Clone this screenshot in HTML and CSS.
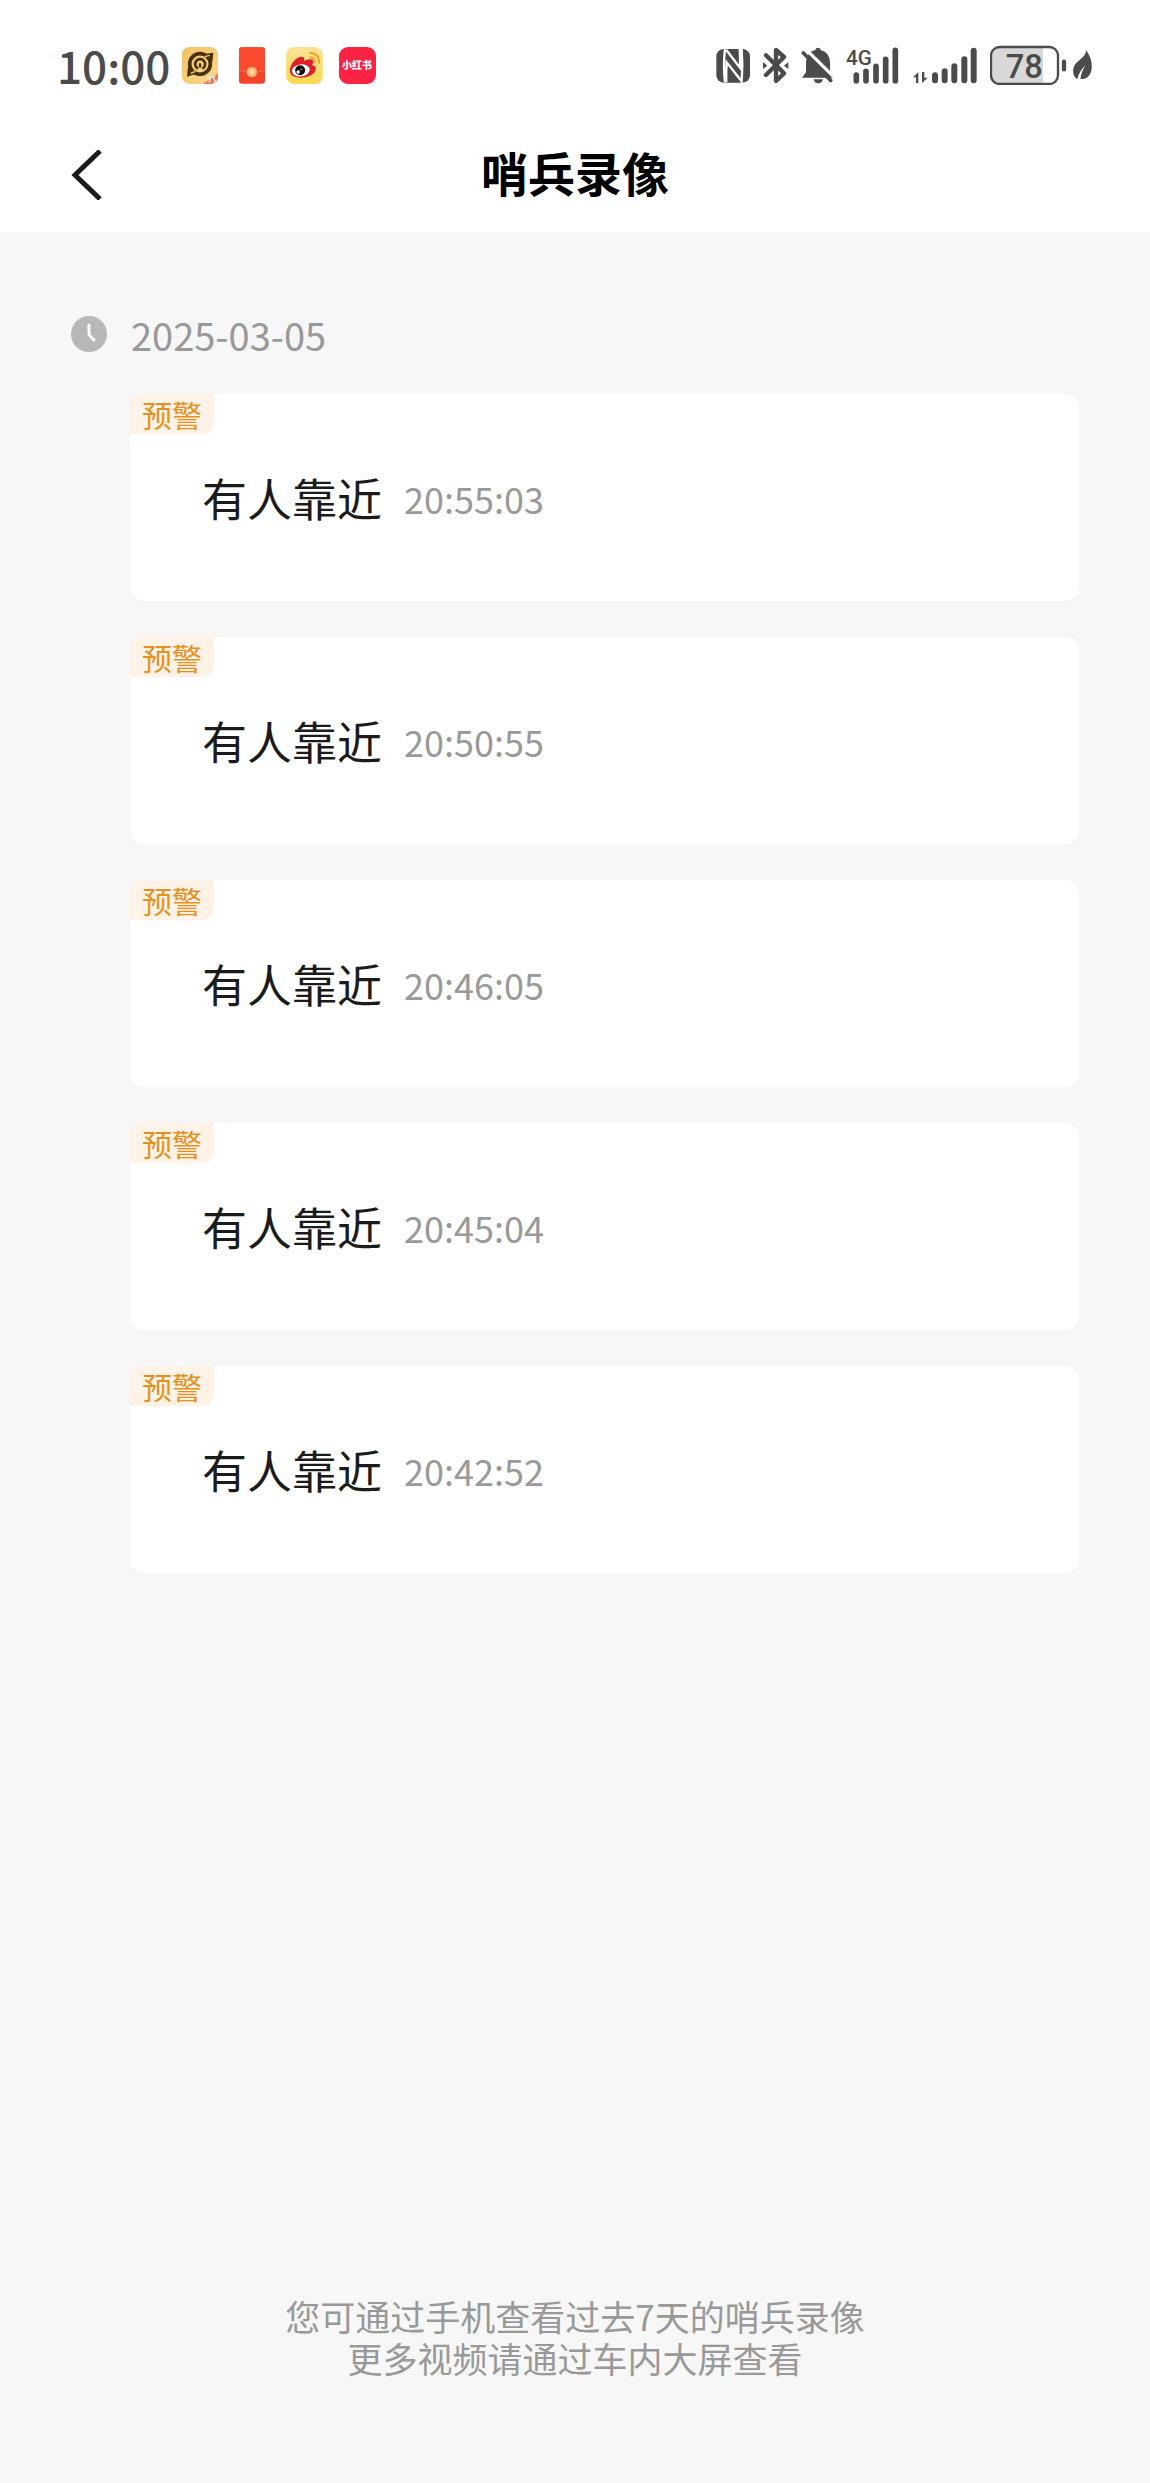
FILE: index.html
```html
<!DOCTYPE html>
<html lang="zh-CN">
<head>
    <meta charset="UTF-8">
    <meta name="viewport" content="width=device-width, initial-scale=1.0">
    <title>哨兵录像</title>
    <link rel="stylesheet" href="styles.css">
</head>
<body>
    <div class="status-bar">
        <div class="status-left">
            <span class="clock">10:00</span>
            <svg class="app-icon" viewBox="428 51 108 111" width="36" height="37" aria-hidden="true">
                <defs>
                    <linearGradient id="gold" x1="0" y1="0" x2="1" y2="1"><stop offset="0" stop-color="#f0c267"/><stop offset="1" stop-color="#fbd98c"/></linearGradient>
                    <clipPath id="goldClip"><rect x="428" y="51" width="108" height="111" rx="22"/></clipPath>
                </defs>
                <rect x="428" y="51" width="108" height="111" rx="22" fill="url(#gold)"/>
                <circle cx="482" cy="102" r="31" fill="none" stroke="#4a3008" stroke-width="11"/>
                <path d="M496 72 L522 68 L519 96 Z M468 132 L443 140 L446 110 Z" fill="#4a3008"/>
                <path d="M496 80 L511 76 M454 130 L468 124" stroke="#f5cc76" stroke-width="4"/>
                <path d="M476 116 A15 15 0 1 1 489 116" fill="none" stroke="#4a3008" stroke-width="8"/>
                <path d="M482 100 V113" stroke="#4a3008" stroke-width="7"/>
                <path d="M488 164 Q508 150 538 128 V164 Z" fill="#f0705a" clip-path="url(#goldClip)"/>
                <path d="M504 144 L528 138 M512 142 L510 158 M522 142 L528 156" stroke="#fff0e8" stroke-width="5"/>
            </svg>
            <svg class="app-icon packet" viewBox="60 51 79 111" width="26" height="37" aria-hidden="true">
                <rect x="60" y="51" width="79" height="111" rx="9" fill="#f5432a"/>
                <path d="M60 120 Q100 136 139 120 V60 Q139 51 130 51 H69 Q60 51 60 60 Z" fill="#fa4a30"/>
                <path d="M60 120 Q100 136 139 120" fill="none" stroke="#ff8a60" stroke-width="2"/>
                <circle cx="99" cy="126" r="16" fill="#f8b66c"/>
                <circle cx="99" cy="126" r="8" fill="#fbd6a0"/>
            </svg>
            <svg class="app-icon weibo" viewBox="204 51 110 111" width="37" height="37" aria-hidden="true">
                <defs><linearGradient id="sun" x1="0" y1="0" x2="0" y2="1"><stop offset="0" stop-color="#f9e39a"/><stop offset="1" stop-color="#fbd84e"/></linearGradient></defs>
                <rect x="204" y="51" width="110" height="111" rx="24" fill="url(#sun)"/>
                <path d="M215 119 C218 98 236 80 250 80 C259 80 260 87 257 94 C266 87 281 85 284 91 C287 96 284 101 282 106 C292 108 296 114 291 124 C284 137 262 144 245 143 C226 141 213 134 215 119 Z" fill="#e2202c"/>
                <ellipse cx="248" cy="121" rx="27" ry="18" fill="#fff" transform="rotate(-8 248 121)"/>
                <circle cx="246" cy="121" r="15" fill="#151010"/>
                <circle cx="240" cy="126" r="5" fill="#fff"/>
                <circle cx="249" cy="118" r="2" fill="#fff"/>
                <path d="M276 69 Q302 68 303 98 M277 82 Q290 83 289 97" fill="none" stroke="#f0a32c" stroke-width="6" stroke-linecap="round"/>
            </svg>
            <svg class="app-icon" viewBox="0 0 37 37" width="37" height="37" role="img" aria-label="小红书">
                <rect width="37" height="37" rx="9" fill="#fb2344"/>
                <text class="red-text" x="18" y="22" text-anchor="middle">小红书</text>
            </svg>
        </div>
        <div class="status-right">
            <svg class="nfc" viewBox="45 45 105 120" width="35" height="40" aria-hidden="true">
                <rect x="46" y="57" width="101" height="101" rx="22" fill="#4b4b4b"/>
                <path d="M72 157 Q66 107 72 57 M76 60 L117 113 Q118 84 116 57 M76 157 Q75 128 77 97 L122 154 Q126 104 122 57" fill="none" stroke="#fff" stroke-width="7"/>
            </svg>
            <svg class="bluetooth" viewBox="186 45 78 120" width="26" height="40" aria-hidden="true">
                <path d="M195 76 L249 130 L225 153 V60 L249 81 L195 135" fill="none" stroke="#4b4b4b" stroke-width="13" stroke-linejoin="round" stroke-linecap="round"/>
                <path d="M186 96 L199 107 L186 117 Z M262 96 L249 107 L262 117 Z" fill="#4b4b4b"/>
            </svg>
            <svg class="bell" viewBox="297 45 99 120" width="33" height="40" aria-hidden="true">
                <path d="M300 143 L312 127 V98 Q313 66 340 60 Q341 53 348 53 Q355 53 356 60 Q384 67 384 98 V127 L394 143 Z M335 148 H363 Q360 160 349 160 Q338 160 335 148 Z" fill="#4b4b4b"/>
                <path d="M312 58 L398 143" stroke="#fff" stroke-width="10"/>
                <path d="M304 69 L386 151" stroke="#4b4b4b" stroke-width="11" stroke-linecap="round"/>
            </svg>
            <svg class="signal-one" viewBox="435 45 159 120" width="53" height="40" role="img" aria-label="4G">
                <text class="network" x="435" y="105">4G</text>
                <path d="M466 135 V152 M495 124 V152 M525 109 V152 M554 88 V152 M583 61 V152" stroke="#4b4b4b" stroke-width="17" stroke-linecap="round"/>
            </svg>
            <svg class="signal-two" viewBox="66 45 195 120" width="65" height="40" aria-hidden="true">
                <path d="M66 142 L82 126 V159 H75 V142 Z M93 126 V159 L110 143 H100 V126 Z" fill="#4b4b4b"/>
                <path d="M132 136 V151 M161 124 V151 M190 109 V151 M220 88 V151 M248 62 V151" stroke="#4b4b4b" stroke-width="18" stroke-linecap="round"/>
            </svg>
            <svg class="battery" viewBox="300 45 231 120" width="77" height="40" role="img" aria-label="78%">
                <path d="M326 53 H459 V161 H326 Q305 161 305 138 V76 Q305 53 326 53 Z" fill="#d8d8d8"/>
                <rect x="303" y="51" width="201" height="111" rx="26" fill="none" stroke="#4b4b4b" stroke-width="7"/>
                <text class="level" x="403" y="143" text-anchor="middle">78</text>
                <path d="M522 95 V118" stroke="#4b4b4b" stroke-width="13" stroke-linecap="round"/>
            </svg>
            <svg class="leaf" viewBox="549 45 60 120" width="20" height="40" aria-hidden="true">
                <path d="M589 61 C604 83 609 105 603 126 C597 143 585 148 571 147 C573 133 578 120 586 106 C573 119 565 133 562 148 C547 138 545 116 558 100 C570 87 585 82 589 61 Z" fill="#4b4b4b"/>
            </svg>
        </div>
    </div>

    <header class="nav">
        <button class="back" type="button" aria-label="返回">
            <svg viewBox="0 0 32 50" width="32" height="50" aria-hidden="true"><path d="M29 1 L4 25 L29 49" fill="none" stroke="#1b1b1b" stroke-width="5"/></svg>
        </button>
        <h1>哨兵录像</h1>
    </header>

    <main>
        <div class="date-row">
            <svg viewBox="0 0 36 36" width="36" height="36" aria-hidden="true">
                <circle cx="18" cy="18" r="18" fill="#b8b8b8"/>
                <path d="M18 9 V17 Q18 19 19 20 L23 24" fill="none" stroke="#fff" stroke-width="3" stroke-linecap="round"/>
            </svg>
            <time datetime="2025-03-05">2025-03-05</time>
        </div>
        <ul class="events">
            <li class="event">
                <span class="badge">预警</span>
                <span class="name">有人靠近</span>
                <time>20:55:03</time>
            </li>
            <li class="event">
                <span class="badge">预警</span>
                <span class="name">有人靠近</span>
                <time>20:50:55</time>
            </li>
            <li class="event">
                <span class="badge">预警</span>
                <span class="name">有人靠近</span>
                <time>20:46:05</time>
            </li>
            <li class="event">
                <span class="badge">预警</span>
                <span class="name">有人靠近</span>
                <time>20:45:04</time>
            </li>
            <li class="event">
                <span class="badge">预警</span>
                <span class="name">有人靠近</span>
                <time>20:42:52</time>
            </li>
        </ul>
    </main>

    <footer>
        <p>您可通过手机查看过去7天的哨兵录像</p>
        <p>更多视频请通过车内大屏查看</p>
    </footer>
</body>
</html>
```
FILE: styles.css
```css
* { box-sizing: border-box; }
body { margin: 0; min-height: 100vh; display: flex; flex-direction: column; background: #f7f7f7; color: #1b1b1b; font-family: "Noto Sans CJK SC", sans-serif; }

/* status bar */
.status-bar { display: flex; justify-content: space-between; align-items: center; height: 130px; padding: 0 57px; background: #fff; }
.status-left, .status-right { display: flex; align-items: center; }
.status-left { gap: 16px; }
.clock { margin-right: -4px; font-size: 44px; line-height: 48px; font-weight: 500; color: #4b4b4b; }
.packet { margin: 0 5px; }
.status-right { gap: 12px; }
.signal-two { margin-left: 2px; }
.leaf { margin-left: -6px; }
.red-text { font-size: 10px; font-weight: 900; fill: #fff; }
.network { font-family: Roboto, sans-serif; font-size: 62px; font-weight: 500; fill: #4b4b4b; }
.level { font-family: Roboto, sans-serif; font-size: 98px; font-weight: 500; fill: #4b4b4b; }

/* title bar */
.nav { display: grid; grid-template-columns: 1fr auto 1fr; align-items: center; height: 102px; padding: 0 71px 16px; background: #fff; }
.nav h1 { margin: 0; padding-bottom: 2px; font-size: 47px; line-height: 64px; font-weight: 700; color: #000; }
.back { justify-self: start; padding: 4px 0 0; border: 0; background: none; line-height: 0; cursor: pointer; }

/* recordings */
main { padding: 76px 71px 0; }
.date-row { display: flex; align-items: center; gap: 24px; height: 52px; color: #999; font-size: 38px; }
.events { list-style: none; margin: 34px 0 0; padding: 0 0 0 59px; display: flex; flex-direction: column; gap: 36px; }
.event { position: relative; display: flex; align-items: center; gap: 22px; height: 207px; padding: 0 72px; border-radius: 14px; background: #fff; }
.badge { position: absolute; top: 0; left: 0; padding: 0 12px; border-radius: 12px 0 12px 0; background: #fff2e6; color: #e6901e; font-size: 30px; line-height: 40px; }
.name { font-size: 45px; }
.event time { font-size: 36px; color: #999; }

footer { margin-top: auto; padding: 40px 40px 104px; text-align: center; color: #999; font-size: 35px; line-height: 42px; }
footer p { margin: 0; }
```
